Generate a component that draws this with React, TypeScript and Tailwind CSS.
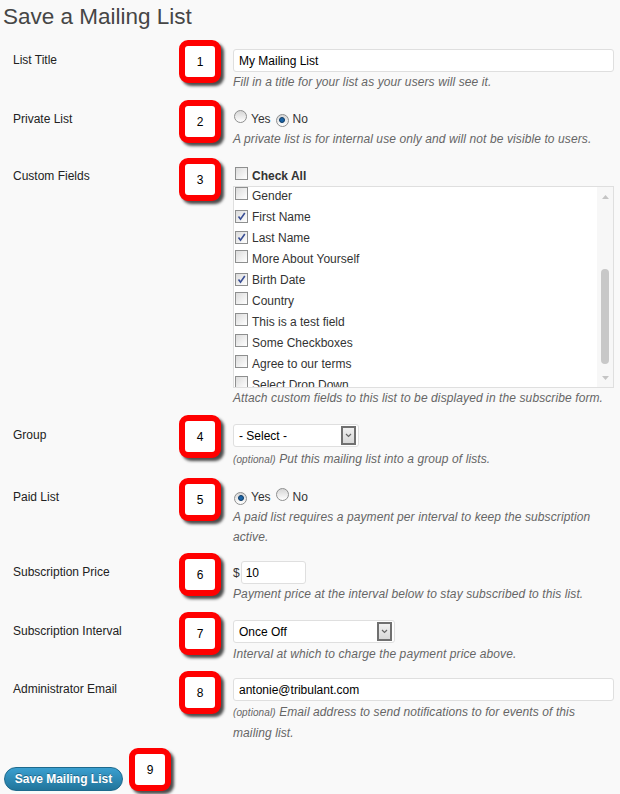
import type { ReactNode } from 'react';

function Badge({ n, className }: { n: number; className: string }) {
  return (
    <div
      className={`absolute left-[179px] w-[42px] h-[43px] rounded-[9px] border-[6px] border-[#ff0000] bg-white shadow-[3px_3px_3px_rgba(0,0,0,0.7)] flex items-center justify-center text-[12px] text-black ${className}`}
    >
      {n}
    </div>
  );
}

function Row({
  label,
  n,
  badgeTop,
  className,
  labelPad = '',
  children,
}: {
  label: string;
  n: number;
  badgeTop: string;
  className: string;
  labelPad?: string;
  children: ReactNode;
}) {
  return (
    <div className={`relative flex ${className}`}>
      <div className={`w-[233px] shrink-0 pl-[13px] leading-5 text-[#222] ${labelPad}`}>{label}</div>
      <div className="flex-1 pr-[6px]">{children}</div>
      <Badge n={n} className={badgeTop} />
    </div>
  );
}

function Hint({ children, className = '' }: { children: ReactNode; className?: string }) {
  return <div className={`italic text-[#666] leading-5 tracking-[0.1px] ${className}`}>{children}</div>;
}

function Radio({ checked }: { checked?: boolean }) {
  return (
    <span className="inline-flex w-[13px] h-[13px] rounded-full border border-[#8e8f8f] bg-linear-to-b from-[#d6d6d6] to-white items-center justify-center">
      {checked && <span className="w-[6px] h-[6px] rounded-full bg-[#1b64a6] border border-[#0d3b66]" />}
    </span>
  );
}

function Checkbox({ checked }: { checked?: boolean }) {
  return (
    <span className="inline-flex w-[13px] h-[13px] border border-[#8e8f8f] bg-linear-to-br from-[#dcdcdc] to-white items-center justify-center shrink-0">
      {checked && (
        <svg width="9" height="9" viewBox="0 0 9 9">
          <path d="M1.5 4.5 L3.5 7.2 L7.8 1" fill="none" stroke="#3a4f95" strokeWidth="1.6" />
        </svg>
      )}
    </span>
  );
}

function Select({ value, width }: { value: string; width: string }) {
  return (
    <div className={`h-[23px] ${width} border border-[#dfdfdf] rounded-[3px] bg-white flex items-center pl-[5px] pr-[2px] text-black`}>
      <span>{value}</span>
      <span className="ml-auto w-[15px] h-[19px] border-2 border-[#707070] bg-linear-to-b from-[#f0f0f0] to-[#d8d8d8] flex items-center justify-center">
        <svg width="7" height="5" viewBox="0 0 7 5">
          <path d="M1 1 L3.5 3.5 L6 1" fill="none" stroke="#666" strokeWidth="1.2" />
        </svg>
      </span>
    </div>
  );
}

const fields = [
  { name: 'Gender', checked: false },
  { name: 'First Name', checked: true },
  { name: 'Last Name', checked: true },
  { name: 'More About Yourself', checked: false },
  { name: 'Birth Date', checked: true },
  { name: 'Country', checked: false },
  { name: 'This is a test field', checked: false },
  { name: 'Some Checkboxes', checked: false },
  { name: 'Agree to our terms', checked: false },
  { name: 'Select Drop Down', checked: false },
];

export default function App() {
  return (
    <div className="w-[620px] h-[794px] bg-[#f9f9f9] text-[12px] font-['Liberation_Sans',Arial,sans-serif] overflow-hidden">
      <h1 className="pt-[3px] pl-[3px] text-[22.5px] leading-[28px] text-[#464646] font-normal">Save a Mailing List</h1>

      <Row label="List Title" n={1} badgeTop="-top-[9px]" className="mt-[18px]" labelPad="pt-[1px]">
        <input
          readOnly
          value="My Mailing List"
          className="block h-[23px] w-full border border-[#dfdfdf] rounded-[3px] bg-white px-[5px] text-black outline-none"
        />
        <Hint>Fill in a title for your list as your users will see it.</Hint>
      </Row>

      <Row label="Private List" n={2} badgeTop="-top-[9px]" className="mt-[17px]">
        <div className="flex items-center h-5 text-[#333]">
          <span className="ml-[1px]"><Radio /></span>
          <span className="ml-[4px]">Yes</span>
          <span className="ml-[5px]"><Radio checked /></span>
          <span className="ml-[4px]">No</span>
        </div>
        <Hint>A private list is for internal use only and will not be visible to users.</Hint>
      </Row>

      <Row label="Custom Fields" n={3} badgeTop="-top-[8px]" className="mt-[17px]">
        <div className="flex items-center h-5 text-[#333] font-bold">
          <span className="ml-[2px]"><Checkbox /></span>
          <span className="ml-[4px]">Check All</span>
        </div>
        <div className="flex h-[202px] border border-[#dfdfdf] bg-white overflow-hidden">
          <div className="flex-1 -mt-[2px]">
            {fields.map(f => (
              <div key={f.name} className="flex items-center h-[21px] text-[#333]">
                <span className="ml-[1px]"><Checkbox checked={f.checked} /></span>
                <span className="ml-[4px]">{f.name}</span>
              </div>
            ))}
          </div>
          <div className="w-[16px] bg-[#f7f7f7] flex flex-col items-center">
            <svg width="7" height="4" viewBox="0 0 7 4" className="mt-[8px]">
              <path d="M0 4 L3.5 0 L7 4 Z" fill="#c4c4c4" />
            </svg>
            <div className="mt-[70px] w-[8px] h-[95px] rounded-full bg-[#c8c8c8]" />
            <svg width="7" height="4" viewBox="0 0 7 4" className="mt-[12px]">
              <path d="M0 0 L3.5 4 L7 0 Z" fill="#c4c4c4" />
            </svg>
          </div>
        </div>
        <Hint>Attach custom fields to this list to be displayed in the subscribe form.</Hint>
      </Row>

      <Row label="Group" n={4} badgeTop="-top-[9px]" className="mt-[16px]" labelPad="pt-[1px]">
        <Select value="- Select -" width="w-[126px]" />
        <Hint className="mt-[2px]">
          <span className="text-[10px]">(optional)</span> Put this mailing list into a group of lists.
        </Hint>
      </Row>

      <Row label="Paid List" n={5} badgeTop="-top-[9px]" className="mt-[17px]">
        <div className="flex items-center h-5 text-[#333]">
          <span className="ml-[1px]"><Radio checked /></span>
          <span className="ml-[4px]">Yes</span>
          <span className="ml-[5px]"><Radio /></span>
          <span className="ml-[4px]">No</span>
        </div>
        <Hint>
          A paid list requires a payment per interval to keep the subscription
          <br />
          active.
        </Hint>
      </Row>

      <Row label="Subscription Price" n={6} badgeTop="-top-[8px]" className="mt-[14px]" labelPad="pt-[1px]">
        <div className="flex items-center h-[23px] text-[#333]">
          <span>$</span>
          <input
            readOnly
            value="10"
            className="ml-[1px] h-[23px] w-[65px] border border-[#dfdfdf] rounded-[3px] bg-white px-[4px] text-black outline-none"
          />
        </div>
        <Hint>Payment price at the interval below to stay subscribed to this list.</Hint>
      </Row>

      <Row label="Subscription Interval" n={7} badgeTop="-top-[8px]" className="mt-[16px]" labelPad="pt-[1px]">
        <Select value="Once Off" width="w-[162px]" />
        <Hint className="mt-[1px]">Interval at which to charge the payment price above.</Hint>
      </Row>

      <Row label="Administrator Email" n={8} badgeTop="-top-[7px]" className="mt-[14px]" labelPad="pt-[1px]">
        <input
          readOnly
          value="antonie@tribulant.com"
          className="block h-[23px] w-full border border-[#dfdfdf] rounded-[3px] bg-white px-[5px] text-black outline-none"
        />
        <Hint className="mt-[1px]">
          <span className="text-[10px]">(optional)</span> Email address to send notifications to for events of this
          <br />
          mailing list.
        </Hint>
      </Row>

      <div className="relative mt-[24px] pl-[4px]">
        <button className="h-[24px] w-[119px] rounded-full border border-[#1e6a8d] bg-linear-to-b from-[#3a9fd0] to-[#21759b] text-white font-bold text-[12px] whitespace-nowrap [text-shadow:0_-1px_0_rgba(0,0,0,0.3)]">
          Save Mailing List
        </button>
        <div className="absolute left-[129px] -top-[19px] w-[42px] h-[43px] rounded-[9px] border-[6px] border-[#ff0000] bg-white shadow-[3px_3px_3px_rgba(0,0,0,0.7)] flex items-center justify-center text-[12px] text-black">
          9
        </div>
      </div>
    </div>
  );
}
